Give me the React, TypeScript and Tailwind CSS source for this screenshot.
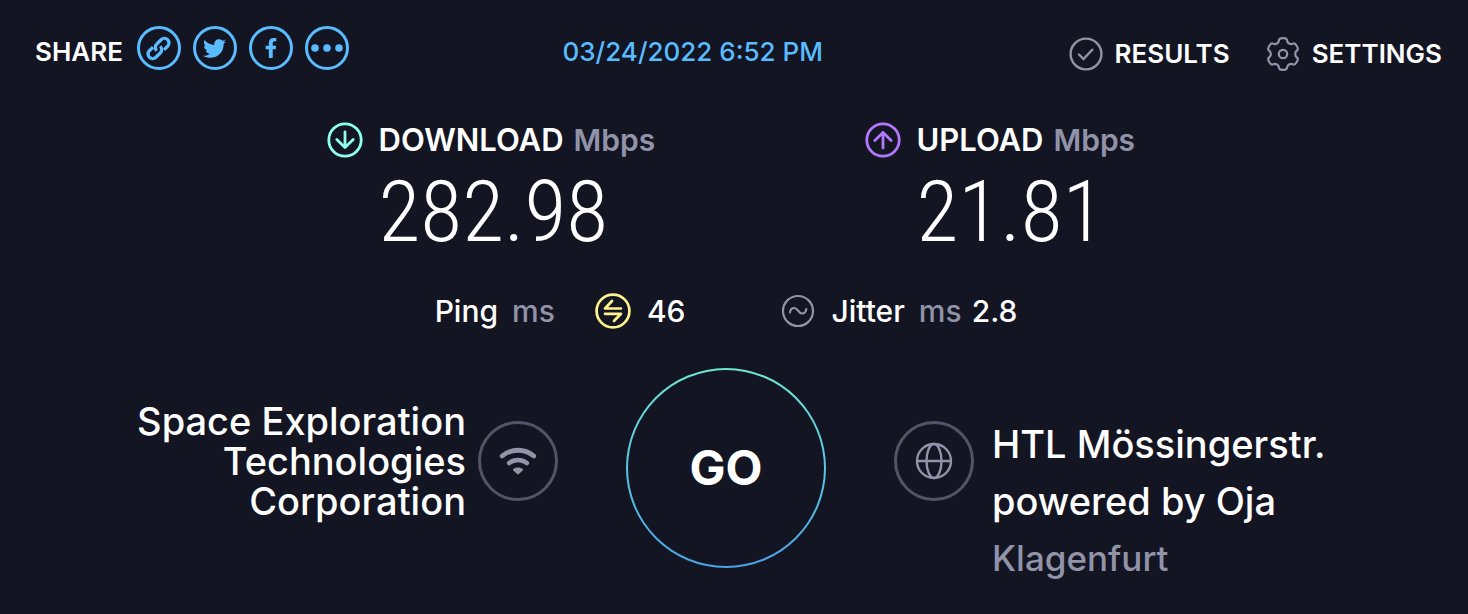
import type { ReactNode } from "react";
import { FaFacebookF, FaTwitter } from "react-icons/fa";

export default function App() {
  return (
    <main className="min-h-screen bg-[#141523] text-white font-['Inter','Liberation_Sans',sans-serif] font-medium">
      {/* Top bar */}
      <header className="flex items-center justify-between pt-[25px] pl-[35px] pr-[26px]">
        <div className="flex items-center gap-3.5">
          <span className="text-[26px] leading-8 font-semibold pt-2">SHARE</span>
          <div className="flex gap-3">
            <ShareLink label="Copy link">
              <LinkIcon />
            </ShareLink>
            <ShareLink label="Twitter">
              <FaTwitter size={23} />
            </ShareLink>
            <ShareLink label="Facebook">
              <FaFacebookF size={20} />
            </ShareLink>
            <ShareLink label="More">
              <svg width="32" height="8" viewBox="0 0 32 8" fill="currentColor">
                <circle cx="4" cy="4" r="3.8" />
                <circle cx="16" cy="4" r="3.8" />
                <circle cx="28" cy="4" r="3.8" />
              </svg>
            </ShareLink>
          </div>
        </div>

        <a href="#result" className="text-[26px] leading-8 text-[#59bcff] pt-2 pr-8">
          03/24/2022 6:52 PM
        </a>

        <nav className="flex items-center gap-9 text-[26px] leading-8 font-semibold pt-3">
          <a href="#results" className="flex items-center gap-3">
            <CheckIcon />
            RESULTS
          </a>
          <a href="#settings" className="flex items-center gap-3">
            <GearIcon />
            SETTINGS
          </a>
        </nav>
      </header>

      {/* Speeds */}
      <section className="flex justify-center gap-52 pt-[49px] pr-2">
        <Speed label="DOWNLOAD" value="282.98" icon={<ArrowIcon />} color="text-[#8ffff0]" width="w-[330px]" />
        <Speed
          label="UPLOAD"
          value="21.81"
          icon={<ArrowIcon up />}
          color="text-[#b178fb]"
          width="w-[269px]"
        />
      </section>

      {/* Ping and jitter */}
      <section className="flex justify-center gap-24 pt-[27px] pr-4 text-[30px] leading-10">
        <div className="flex items-center">
          <span>Ping</span>
          <span className="text-[#9193a8] pl-3.5">ms</span>
          <span className="pl-10 pr-4">
            <PingIcon />
          </span>
          <span>46</span>
        </div>
        <div className="flex items-center">
          <span className="pr-4">
            <JitterIcon />
          </span>
          <span>Jitter</span>
          <span className="text-[#9193a8] pl-3.5 pr-2.5">ms</span>
          <span>2.8</span>
        </div>
      </section>

      {/* Provider, start button, server */}
      <section className="grid grid-cols-[1fr_200px_1fr] items-start gap-[68px] pt-[37px] pr-4">
        <div className="flex items-center justify-end gap-3 pt-[33px]">
          <p className="text-right text-[38px] leading-10">
            Space Exploration
            <br />
            Technologies
            <br />
            Corporation
          </p>
          <RoundIcon>
            <WifiIcon />
          </RoundIcon>
        </div>

        <GoButton />

        <div className="flex items-start gap-[18px] pt-12">
          <div className="pt-[5px]">
            <RoundIcon>
              <GlobeIcon />
            </RoundIcon>
          </div>
          <div className="whitespace-nowrap">
            <p className="text-[38px] leading-[57px]">
              HTL Mössingerstr.
              <br />
              powered by Oja
            </p>
            <p className="text-[35px] leading-[57px] text-[#9193a8]">Klagenfurt</p>
          </div>
        </div>
      </section>
    </main>
  );
}

function ShareLink({ label, children }: { label: string; children: ReactNode }) {
  return (
    <a
      href="#share"
      aria-label={label}
      className="flex size-11 items-center justify-center rounded-full border-3 border-[#59bcff] text-[#59bcff]"
    >
      {children}
    </a>
  );
}

function Speed({
  label,
  value,
  icon,
  color,
  width,
}: {
  label: string;
  value: string;
  icon: ReactNode;
  color: string;
  width: string;
}) {
  return (
    <div className={`flex items-start gap-4 whitespace-nowrap ${width}`}>
      <span className={`pt-0.5 ${color}`}>{icon}</span>
      <div>
        <h2 className="flex items-baseline gap-2.5 leading-10 font-semibold">
          <span className="text-[31px]">{label}</span>
          <span className="text-[30px] text-[#9193a8]">Mbps</span>
        </h2>
        <p className="text-[86px] leading-[104px] font-light font-['Roboto_Condensed','Liberation_Sans_Narrow',Roboto,sans-serif]">
          {value}
        </p>
      </div>
    </div>
  );
}

function RoundIcon({ children }: { children: ReactNode }) {
  return (
    <div className="flex size-20 shrink-0 items-center justify-center rounded-full border-3 border-[#535466] text-[#9193a8]">
      {children}
    </div>
  );
}

function GoButton() {
  return (
    <button
      type="button"
      className="size-50 rounded-full bg-linear-to-b from-[#6ee7d2] to-[#4aa3e8] p-0.5 text-[48px] font-bold"
    >
      <span className="flex size-full items-center justify-center rounded-full bg-[#141523]">GO</span>
    </button>
  );
}

function LinkIcon() {
  return (
    <svg width="27" height="27" viewBox="0 0 24 24" fill="none" stroke="currentColor" strokeWidth="2.9">
      <path d="M10.400 14a4.300 4.300 0 0 1 .3-6.200l3.600-3.600a4.100 4.100 0 0 1 5.800 5.800l-3.200 3.200" />
      <path d="M13.600 10a4.300 4.300 0 0 1-.3 6.200l-3.600 3.600a4.100 4.100 0 0 1-5.800-5.800l3.200-3.200" />
    </svg>
  );
}

function CheckIcon() {
  return (
    <svg width="34" height="34" viewBox="0 0 34 34" fill="none" stroke="#9193a8" strokeWidth="2.4">
      <circle cx="17" cy="17" r="15.4" />
      <path d="M10 17.5l4.5 4.5 8.8-9.3" strokeLinecap="round" />
    </svg>
  );
}

// one tooth every 60 degrees, corners rounded by running curves through the midpoints
function gearPath() {
  const points: number[][] = [];
  for (let tooth = 0; tooth < 6; tooth++) {
    for (const [offset, radius] of [[-14, 16.4], [14, 16.4], [19, 12.4], [41, 12.4]]) {
      const angle = ((tooth * 60 + offset - 90) * Math.PI) / 180;
      points.push([17 + radius * Math.cos(angle), 17 + radius * Math.sin(angle)]);
    }
  }
  const mid = (a: number[], b: number[]) => `${(a[0] + b[0]) / 2} ${(a[1] + b[1]) / 2}`;
  const last = points[points.length - 1];
  const curves = points.map((p, i) => `Q${p[0]} ${p[1]} ${mid(p, points[(i + 1) % points.length])}`);
  return `M${mid(last, points[0])}${curves.join("")}Z`;
}

function GearIcon() {
  return (
    <svg width="34" height="34" viewBox="0 0 34 34" fill="none" stroke="#9193a8" strokeWidth="2.2">
      <path d={gearPath()} />
      <circle cx="17" cy="17" r="4.2" />
    </svg>
  );
}

function ArrowIcon({ up = false }: { up?: boolean }) {
  return (
    <svg
      width="36"
      height="36"
      viewBox="0 0 36 36"
      fill="none"
      stroke="currentColor"
      strokeWidth="2.8"
      strokeLinecap="round"
      strokeLinejoin="round"
    >
      <circle cx="18" cy="18" r="16.2" />
      <path d={up ? "M18 26V10.500M9.800 18.500L18 10.500l8.200 8" : "M18 10v15.500M9.800 17.500L18 25.500l8.200-8"} />
    </svg>
  );
}

function PingIcon() {
  return (
    <svg width="36" height="36" viewBox="0 0 36 36" fill="none" stroke="#fff38e" strokeWidth="2.7" strokeLinecap="round" strokeLinejoin="round">
      <circle cx="18" cy="18" r="16.4" />
      <path d="M17 8l-7 7.500h16M10 20.800h16L19 28" />
    </svg>
  );
}

function JitterIcon() {
  return (
    <svg width="34" height="34" viewBox="0 0 34 34" fill="none" stroke="#9193a8" strokeWidth="2.2" strokeLinecap="round">
      <circle cx="17" cy="17" r="15" />
      <path d="M9 18.500c.3-3 2-4.500 4.300-4.500 3.500 0 4.200 5.500 7.700 5.500 2.300 0 4-1.500 4.300-4.500" />
    </svg>
  );
}

function WifiIcon() {
  return (
    <svg width="38" height="28" viewBox="0 0 38 28" fill="none" stroke="currentColor" strokeLinecap="round">
      <path d="M3.200 9C12.500 1.300 25.500 1.300 34.800 9" strokeWidth="4.800" />
      <path d="M10.200 16c5.200-4 12.400-4 17.600 0" strokeWidth="4.600" />
      <path d="M19 20.400c2.200 0 3.700.7 4.800 1.700.4.400.4.900 0 1.300l-4 3.600c-.5.500-1.100.5-1.600 0l-4-3.600c-.4-.4-.4-.9 0-1.300 1.100-1 2.600-1.700 4.800-1.700z" fill="currentColor" stroke="none" />
    </svg>
  );
}

function GlobeIcon() {
  return (
    <svg width="38" height="38" viewBox="0 0 38 38" fill="none" stroke="currentColor" strokeWidth="2.4">
      <circle cx="19" cy="19" r="17" />
      <ellipse cx="19" cy="19" rx="7.500" ry="17" />
      <path d="M2 19h34" />
    </svg>
  );
}
